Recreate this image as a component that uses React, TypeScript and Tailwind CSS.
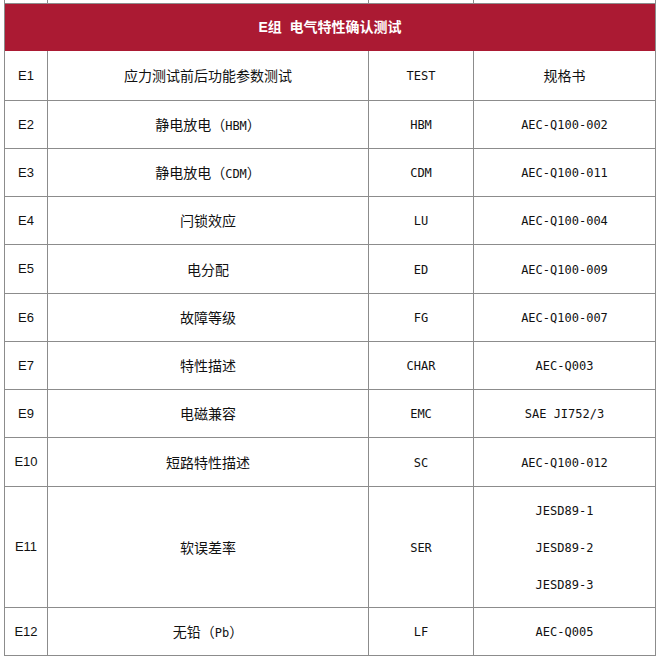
import React from 'react';

type Row = { id: string; name: string; code: string; spec: string[]; h: string };

const rows: Row[] = [
  { id: 'E1', name: '应力测试前后功能参数测试', code: 'TEST', spec: ['规格书'], h: 'h-[50px]' },
  { id: 'E2', name: '静电放电（HBM）', code: 'HBM', spec: ['AEC-Q100-002'], h: 'h-[48px]' },
  { id: 'E3', name: '静电放电（CDM）', code: 'CDM', spec: ['AEC-Q100-011'], h: 'h-[48px]' },
  { id: 'E4', name: '闩锁效应', code: 'LU', spec: ['AEC-Q100-004'], h: 'h-[48px]' },
  { id: 'E5', name: '电分配', code: 'ED', spec: ['AEC-Q100-009'], h: 'h-[49px]' },
  { id: 'E6', name: '故障等级', code: 'FG', spec: ['AEC-Q100-007'], h: 'h-[48px]' },
  { id: 'E7', name: '特性描述', code: 'CHAR', spec: ['AEC-Q003'], h: 'h-[48px]' },
  { id: 'E9', name: '电磁兼容', code: 'EMC', spec: ['SAE JI752/3'], h: 'h-[48px]' },
  { id: 'E10', name: '短路特性描述', code: 'SC', spec: ['AEC-Q100-012'], h: 'h-[49px]' },
  { id: 'E11', name: '软误差率', code: 'SER', spec: ['JESD89-1', 'JESD89-2', 'JESD89-3'], h: 'h-[121px]' },
  { id: 'E12', name: '无铅（Pb）', code: 'LF', spec: ['AEC-Q005'], h: 'h-[48px]' },
];

// CJK runs get the CJK face at 14px, latin runs a half-width mono at 12px
const Txt = ({ t }: { t: string }) => {
  const parts = t.split(/([\u3000-\u9fff\uff00-\uffef]+)/).filter(Boolean);
  return (
    <span className="block whitespace-pre text-[14px] leading-[20px]">
      {parts.map((p, i) =>
        /[\u3000-\u9fff\uff00-\uffef]/.test(p) ? (
          <span key={i} className="font-['Noto_Sans_CJK_SC',sans-serif] text-[14px]">{p}</span>
        ) : (
          <span key={i} className="font-['DejaVu_Sans_Mono','Liberation_Mono',monospace] text-[12px]">{p}</span>
        )
      )}
    </span>
  );
};

const cell = 'flex flex-col items-center justify-center border-r border-[#8c8c8c] text-[#111]';

const App = () => {
  return (
    <div className="w-[662px] h-[656px] bg-white overflow-hidden">
      <div className="ml-[4px] w-[652px] border-l border-[#8c8c8c]">
        <div className="flex h-[4px] border-b border-[#8c8c8c]">
          <div className="w-[43px] border-r border-[#8c8c8c]" />
          <div className="w-[321px] border-r border-[#8c8c8c]" />
          <div className="w-[105px] border-r border-[#8c8c8c]" />
          <div className="w-[182px] border-r border-[#8c8c8c]" />
        </div>
        <div className="flex h-[47px] items-center justify-center bg-[#ab1a33] border-r border-[#8c8c8c] text-white text-[14px] font-bold font-['Liberation_Sans','Noto_Sans_CJK_SC',sans-serif]">
          E组&nbsp; 电气特性确认测试
        </div>
        {rows.map((r) => (
          <div key={r.id} className={`flex border-b border-[#8c8c8c] ${r.h}`}>
            <div className={`${cell} w-[43px] text-[13px] leading-[20px] font-['Liberation_Sans',sans-serif]`}>{r.id}</div>
            <div className={`${cell} w-[321px]`}>
              <Txt t={r.name} />
            </div>
            <div className={`${cell} w-[105px]`}>
              <Txt t={r.code} />
            </div>
            <div className={`${cell} w-[182px] gap-[16px]`}>
              {r.spec.map((s) => (
                <Txt key={s} t={s} />
              ))}
            </div>
          </div>
        ))}
      </div>
    </div>
  );
};

export default App;
